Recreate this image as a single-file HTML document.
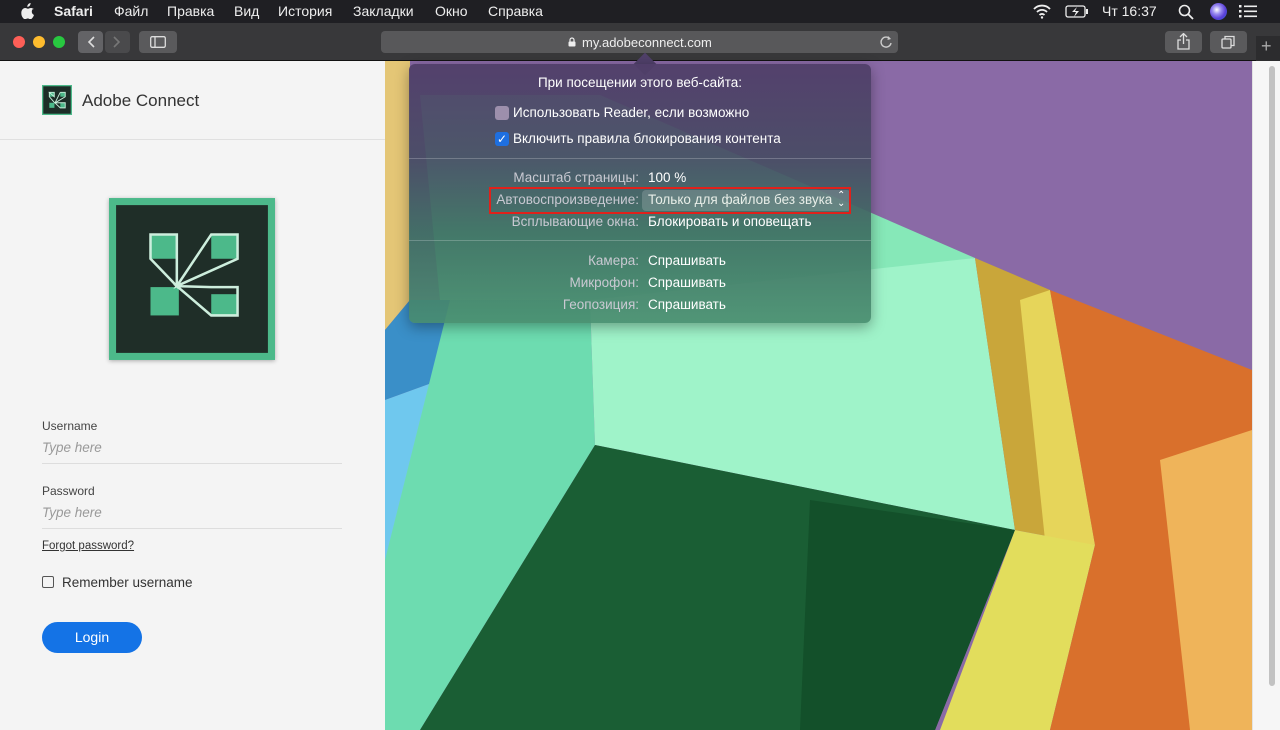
<!DOCTYPE html>
<html><head><meta charset="utf-8"><style>
*{margin:0;padding:0;box-sizing:border-box}
body{width:1280px;height:730px;overflow:hidden;position:relative;background:#f4f4f4;font-family:"Liberation Sans","DejaVu Sans",sans-serif}
.menubar{position:absolute;left:0;top:0;width:1280px;height:23px;background:#1f1f23;color:#eee;font-size:14px}
.menubar span{position:absolute;top:3px}
.toolbar{position:absolute;left:0;top:23px;width:1280px;height:38px;background:#38383a;border-bottom:1px solid #111}
.dot{position:absolute;top:36px;width:12px;height:12px;border-radius:50%}
.btn{position:absolute;background:#5a5a5c;border-radius:4px}
.left{position:absolute;left:0;top:61px;width:385px;height:669px;background:#f4f4f4}
.pop{position:absolute;left:409px;top:64px;width:462px;height:259px;border-radius:6px;overflow:hidden;box-shadow:0 4px 14px rgba(0,0,0,.35);
background:linear-gradient(180deg,rgba(80,62,105,.94) 0%,rgba(72,75,100,.93) 35%,rgba(62,110,98,.92) 65%,rgba(72,140,110,.9) 100%)}
.pop .lb{position:absolute;right:232px;color:#c9c9d2;font-size:13.5px;text-align:right;white-space:nowrap}
.pop .vl{position:absolute;left:239px;color:#fff;font-size:13.5px;white-space:nowrap}
.pop .t{position:absolute;color:#fff;font-size:13.5px;white-space:nowrap}
</style></head><body>
<div class="menubar">
<svg style="position:absolute;left:21px;top:3px" width="14" height="16" viewBox="0 0 14 16"><path d="M9.6 0c.1 1-.3 2-.9 2.7-.6.7-1.5 1.2-2.4 1.1-.1-1 .4-2 .9-2.6C7.8.5 8.8 0 9.6 0zM12.6 5.5c-.1.1-1.8 1-1.8 3.1 0 2.4 2.1 3.2 2.2 3.3 0 .1-.3 1.2-1.1 2.3-.7 1-1.4 2-2.5 2-1.1 0-1.4-.7-2.7-.7-1.2 0-1.6.7-2.7.7-1.1 0-1.9-1.1-2.6-2.1C.4 12.7-.3 9.2 1.1 6.9c.7-1.2 1.9-1.9 3.2-1.9 1 0 2 .7 2.7.7.6 0 1.8-.8 3.1-.7.5 0 1.9.2 2.5 1.5z" fill="#eee"/></svg>
<span style="left:54px;font-weight:bold">Safari</span>
<span style="left:114px">Файл</span><span style="left:167px">Правка</span><span style="left:234px">Вид</span><span style="left:278px">История</span><span style="left:353px">Закладки</span><span style="left:435px">Окно</span><span style="left:488px">Справка</span>
<svg style="position:absolute;left:1032px;top:4px" width="20" height="15" viewBox="0 0 20 15"><path d="M2 5a11 11 0 0 1 16 0M5 8a7 7 0 0 1 10 0M7.5 11a3.5 3.5 0 0 1 5 0" stroke="#eee" stroke-width="1.8" fill="none"/><circle cx="10" cy="13.5" r="1.2" fill="#eee"/></svg>
<svg style="position:absolute;left:1065px;top:5px" width="24" height="13"><rect x="1" y="1" width="19" height="11" rx="2" stroke="#eee" fill="none" stroke-width="1.3"/><rect x="21" y="4" width="2" height="5" fill="#eee"/><path d="M12 2L7 7h4l-2 5 5-6h-4z" fill="#eee"/></svg>
<span style="left:1102px">Чт 16:37</span>
<svg style="position:absolute;left:1178px;top:4px" width="16" height="16"><circle cx="6.5" cy="6.5" r="5" stroke="#eee" stroke-width="1.6" fill="none"/><path d="M10 10l5 5" stroke="#eee" stroke-width="1.8"/></svg>
<div style="position:absolute;left:1210px;top:3px;width:17px;height:17px;border-radius:50%;background:radial-gradient(circle at 40% 40%,#fff 0,#9a8cf0 30%,#5a3fd8 60%,#2a63d8 100%)"></div>
<svg style="position:absolute;left:1239px;top:5px" width="18" height="13"><g fill="#eee"><rect x="0" y="0" width="2.5" height="2.5"/><rect x="0" y="5" width="2.5" height="2.5"/><rect x="0" y="10" width="2.5" height="2.5"/><rect x="5" y="0.5" width="13" height="1.6"/><rect x="5" y="5.5" width="13" height="1.6"/><rect x="5" y="10.5" width="13" height="1.6"/></g></svg>
</div>
<div class="toolbar"></div>
<div class="dot" style="left:13px;background:#fe5f57"></div>
<div class="dot" style="left:33px;background:#febc2e"></div>
<div class="dot" style="left:53px;background:#28c840"></div>
<div class="btn" style="left:78px;top:31px;width:25px;height:22px;background:#636366"></div>
<div class="btn" style="left:105px;top:31px;width:25px;height:22px;background:#4a4a4c"></div>
<svg style="position:absolute;left:78px;top:31px" width="52" height="22"><path d="M16 6l-5 5 5 5" stroke="#ddd" stroke-width="1.6" fill="none"/><path d="M36 6l5 5-5 5" stroke="#777" stroke-width="1.6" fill="none"/></svg>
<div class="btn" style="left:139px;top:31px;width:38px;height:22px"></div>
<svg style="position:absolute;left:150px;top:36px" width="16" height="12"><rect x="0.7" y="0.7" width="14.6" height="10.6" rx="1.5" stroke="#ddd" fill="none" stroke-width="1.3"/><path d="M5 1v10" stroke="#ddd" stroke-width="1.3"/></svg>
<div class="btn" style="left:381px;top:31px;width:517px;height:22px;background:#58585a"></div>
<svg style="position:absolute;left:568px;top:37px" width="8" height="10"><path d="M2 4.5V3a2 2 0 0 1 4 0v1.5" stroke="#eee" stroke-width="1.2" fill="none"/><rect x="0.5" y="4.5" width="7" height="5" rx="1" fill="#eee"/></svg>
<div style="position:absolute;left:582px;top:35px;color:#eee;font-size:13px">my.adobeconnect.com</div>
<svg style="position:absolute;left:879px;top:35px" width="14" height="14"><path d="M11 4A5 5 0 1 0 12 8" stroke="#ccc" stroke-width="1.4" fill="none"/><path d="M9 1l3 3-3.5 1z" fill="#ccc"/></svg>
<div class="btn" style="left:1165px;top:31px;width:37px;height:22px"></div>
<svg style="position:absolute;left:1176px;top:33px" width="15" height="17"><path d="M7.5 1v10M4 4l3.5-3.5L11 4" stroke="#ddd" stroke-width="1.3" fill="none"/><path d="M5 7H2v9h11V7h-3" stroke="#ddd" stroke-width="1.3" fill="none"/></svg>
<div class="btn" style="left:1210px;top:31px;width:37px;height:22px"></div>
<svg style="position:absolute;left:1221px;top:35px" width="15" height="15"><rect x="1" y="4" width="9" height="9" rx="1" stroke="#ddd" fill="none" stroke-width="1.3"/><path d="M4 4V1.5h9v9h-3" stroke="#ddd" fill="none" stroke-width="1.3"/></svg>
<div style="position:absolute;left:1256px;top:36px;width:24px;height:25px;background:#2c2c2e"></div>
<div style="position:absolute;left:1261px;top:36px;color:#aaa;font-size:18px">+</div>

<div class="left">
<div style="position:absolute;left:0;top:78px;width:385px;height:1px;background:#e0e0e0"></div>
<svg style="position:absolute;left:42px;top:24px" width="30" height="30" viewBox="0 0 164 164"><rect width="164" height="164" fill="#4cb98a"/><rect x="7" y="7" width="150" height="150" fill="#1d2d27"/><g fill="#4cb98a"><rect x="40" y="40" width="27" height="24"/><rect x="100" y="40" width="27" height="24"/><rect x="40" y="97" width="28" height="28"/><rect x="100" y="97" width="27" height="28"/></g><g stroke="#c9f0dc" stroke-width="5" fill="none"><path d="M40 40h27v24l-27-24zM40 40v24l30 34M100 40h27v24l-56 34M100 40l-29 58M71 98l29 27h27V97h-27z"/></g></svg>
<div style="position:absolute;left:82px;top:30px;font-size:17px;color:#333">Adobe Connect</div>
<svg style="position:absolute;left:109px;top:137px;filter:drop-shadow(0 1px 2px rgba(0,0,0,.3))" width="166" height="162" viewBox="0 0 164 160"><rect width="164" height="160" fill="#4cb98a"/><rect x="7" y="7" width="150" height="146" fill="#1f2e28"/><g fill="#4cb98a"><rect x="41" y="36" width="26" height="24"/><rect x="101" y="36" width="26" height="24"/><rect x="41" y="88" width="28" height="28"/><rect x="101" y="95" width="26" height="21"/></g><g stroke="#cdeedd" stroke-width="2.5" fill="none"><path d="M41 36h26v51L41 60z M67 87l34-51h26v24z M67 87l34 29h26V88h-26z"/></g></svg>
<div style="position:absolute;left:42px;top:358px;font-size:12px;color:#444">Username</div>
<div style="position:absolute;left:42px;top:379px;font-size:13.5px;color:#999;font-style:italic">Type here</div>
<div style="position:absolute;left:42px;top:402px;width:300px;height:1px;background:#ddd"></div>
<div style="position:absolute;left:42px;top:423px;font-size:12px;color:#444">Password</div>
<div style="position:absolute;left:42px;top:444px;font-size:13.5px;color:#999;font-style:italic">Type here</div>
<div style="position:absolute;left:42px;top:467px;width:300px;height:1px;background:#ddd"></div>
<div style="position:absolute;left:42px;top:479px;font-size:11.5px;color:#333;text-decoration:underline">Forgot password?</div>
<div style="position:absolute;left:42px;top:515px;width:12px;height:12px;border:1.5px solid #555;border-radius:2px"></div>
<div style="position:absolute;left:62px;top:514px;font-size:13.5px;color:#333">Remember username</div>
<div style="position:absolute;left:42px;top:561px;width:100px;height:31px;border-radius:16px;background:#1473e6;color:#fff;font-size:14px;text-align:center;line-height:31px">Login</div>
</div>

<svg style="position:absolute;left:385px;top:61px" width="867" height="669" viewBox="385 61 867 669">
<rect x="385" y="61" width="867" height="669" fill="#8a6aa6"/>
<polygon points="385,61 410,61 410,300 385,330" fill="#e4c676"/>
<polygon points="600,95 975,258 590,320 440,300 420,95" fill="#86e8b8"/>
<polygon points="385,330 410,300 450,300 440,380 385,400" fill="#3a8fc8"/>
<polygon points="385,400 440,380 420,560 385,560" fill="#6fc8ee"/>
<polygon points="450,300 590,300 595,445 420,730 385,730 385,560" fill="#6ddcb0"/>
<polygon points="590,300 975,258 1015,530 595,445" fill="#9ff3c9"/>
<polygon points="595,445 1015,530 935,730 420,730" fill="#1a5e34"/>
<polygon points="810,500 1015,530 935,730 800,730" fill="#13502a"/>
<polygon points="975,258 1050,290 1095,545 1015,530" fill="#c9a63a"/>
<polygon points="1020,300 1050,290 1095,545 1045,540" fill="#e6d55a"/>
<polygon points="1015,530 1095,545 1050,730 940,730" fill="#e2dd5c"/>
<polygon points="1050,290 1252,370 1252,730 1050,730 1095,545" fill="#d9702c"/>
<polygon points="1160,460 1252,430 1252,730 1190,730" fill="#efb45a"/>
</svg>
<div style="position:absolute;left:1252px;top:61px;width:28px;height:669px;background:#f6f6f6;border-left:1px solid #e2e2e2"></div>
<div style="position:absolute;left:1269px;top:66px;width:6px;height:620px;border-radius:3px;background:#c2c2c2"></div>

<div style="position:absolute;left:637px;top:56px;width:16px;height:16px;transform:rotate(45deg);background:#50406a"></div>
<div class="pop">
<div class="t" style="left:0;width:462px;text-align:center;top:11px">При посещении этого веб-сайта:</div>
<div style="position:absolute;left:86px;top:42px;width:14px;height:14px;border-radius:3px;background:#9d8fac"></div>
<div class="t" style="left:104px;top:41px">Использовать Reader, если возможно</div>
<div style="position:absolute;left:86px;top:68px;width:14px;height:14px;border-radius:3px;background:#1e6fe0;color:#fff;font-size:12px;line-height:14px;text-align:center">✓</div>
<div class="t" style="left:104px;top:67px">Включить правила блокирования контента</div>
<div style="position:absolute;left:0;top:94px;width:462px;height:1px;background:rgba(255,255,255,.22)"></div>
<div class="lb" style="top:106px">Масштаб страницы:</div><div class="vl" style="top:106px">100 %</div>
<div style="position:absolute;left:233px;top:126px;width:209px;height:21px;border-radius:4px;background:rgba(255,255,255,.17)"></div>
<div class="lb" style="top:128px">Автовоспроизведение:</div><div class="vl" style="top:128px;color:#e8eee8">Только для файлов без звука</div>
<div class="vl" style="left:428px;top:128px;font-size:10px;line-height:8px">⌃<br>⌄</div>
<div style="position:absolute;left:80px;top:123px;width:362px;height:27px;border:2px solid #e0211b"></div>
<div class="lb" style="top:150px">Всплывающие окна:</div><div class="vl" style="top:150px">Блокировать и оповещать</div>
<div style="position:absolute;left:0;top:176px;width:462px;height:1px;background:rgba(255,255,255,.22)"></div>
<div class="lb" style="top:189px">Камера:</div><div class="vl" style="top:189px">Спрашивать</div>
<div class="lb" style="top:211px">Микрофон:</div><div class="vl" style="top:211px">Спрашивать</div>
<div class="lb" style="top:233px">Геопозиция:</div><div class="vl" style="top:233px">Спрашивать</div>
</div>
</body></html>
